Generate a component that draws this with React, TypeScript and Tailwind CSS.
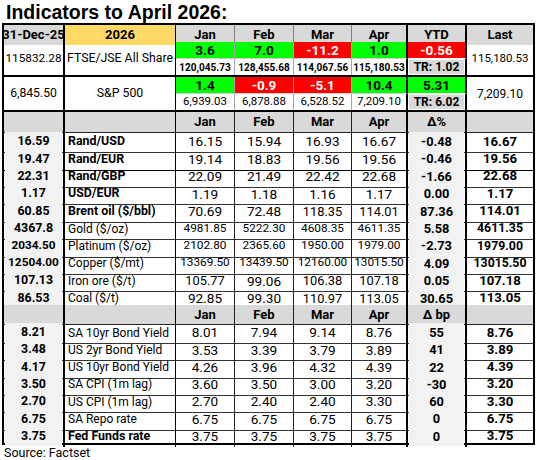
import React from "react";

const GRID = "grid grid-cols-[61px_111px_59px_59px_58px_56px_59px_66px]";

type Move = { v: string; up: boolean };

function sizeFor(s: string) {
  if (s.length >= 7) return "text-[11.8px]";
  if (s.length === 6) return "text-[12.8px]";
  return "text-[13.6px]";
}

const monthBorder = [
  "border-r border-r-[#1f1f1f]",
  "border-r border-r-[#1f1f1f]",
  "border-r border-r-[#1f1f1f]",
  "border-r-2 border-r-black",
];

function IndexBlock({
  c1,
  c1Size,
  label,
  moves,
  prices,
  priceBold,
  ytd,
  tr,
  last,
  lastSize,
}: {
  c1: string;
  c1Size: string;
  label: string;
  moves: Move[];
  prices: string[];
  priceBold: boolean;
  ytd: Move;
  tr: string;
  last: string;
  lastSize: string;
}) {
  const topBorder = [
    "border-r border-r-[#a6a6a6]",
    "border-r border-r-[#a6a6a6]",
    "border-r border-r-[#a6a6a6]",
    "border-r-2 border-r-black",
  ];
  return (
    <div className={`${GRID} grid-rows-[17px_16px] border-b-2 border-b-black`}>
      <div className={`row-span-2 flex items-center justify-center border-r-2 border-r-black ${c1Size}`}>{c1}</div>
      <div className="row-span-2 flex items-center justify-center border-r border-r-black text-[12.3px]">{label}</div>
      {moves.map((m, i) => (
        <div
          key={"m" + i}
          className={`flex items-center justify-center font-bold text-[13.5px] border-b border-b-[#cfcfcf] ${topBorder[i]} ${
            m.up ? "bg-[#00ff00] text-black" : "bg-[#ff0000] text-white"
          }`}
        >
          {m.v}
        </div>
      ))}
      <div
        className={`flex items-center justify-center font-bold text-[13.5px] border-r-2 border-r-black border-b border-b-white ${
          ytd.up ? "bg-[#00ff00] text-black" : "bg-[#ff0000] text-white"
        }`}
      >
        {ytd.v}
      </div>
      <div className={`row-span-2 flex items-center justify-center ${lastSize}`}>{last}</div>
      {prices.map((p, i) => (
        <div
          key={"p" + i}
          className={`flex items-center justify-center ${priceBold ? "font-bold text-[10px]" : "text-[11.5px]"} ${topBorder[i]}`}
        >
          {p}
        </div>
      ))}
      <div className="border-r-2 border-r-black p-px">
        <div className="flex h-full items-center justify-center bg-[#d9d9d9] font-bold text-[12px]">{tr}</div>
      </div>
    </div>
  );
}

function HeaderRow({ ytdLabel, h }: { ytdLabel: string; h: string }) {
  const cell = "flex items-center justify-center bg-[#d9d9d9] border-b border-b-[#262626] font-bold text-[13px]";
  return (
    <div className={`${GRID} ${h}`}>
      <div className={`${cell} border-r-2 border-r-black`}></div>
      <div className={`${cell} border-r border-r-black`}></div>
      {["Jan", "Feb", "Mar", "Apr"].map((m, i) => (
        <div key={m} className={`${cell} ${monthBorder[i]}`}>
          {m}
        </div>
      ))}
      <div className={`${cell} border-r-2 border-r-black`}>{ytdLabel}</div>
      <div className={cell}></div>
    </div>
  );
}

type Row = { c1: string; label: string; bold: boolean; m: string[]; d: string; last: string };

function DataRow({ r, h, bottom }: { r: Row; h: string; bottom: "thin" | "dark" | "thick" | "none" }) {
  const bb =
    bottom === "thick"
      ? "border-b-2 border-b-black"
      : bottom === "dark"
      ? "border-b border-b-black"
      : bottom === "thin"
      ? "border-b border-b-[#333333]"
      : "";
  return (
    <div className={`${GRID} ${h}`}>
      <div className={`border-r-2 border-r-black p-px ${bb}`}>
        <div className={`flex h-full items-center justify-center bg-[#f2f2f2] font-bold ${r.c1.length >= 7 ? "text-[11.8px]" : "text-[12.4px]"}`}>
          {r.c1}
        </div>
      </div>
      <div className={`flex items-center pl-[3px] border-r border-r-black ${r.bold ? "font-bold text-[12.4px]" : "text-[12px]"} ${bb}`}>
        {r.label}
      </div>
      {r.m.map((v, i) => (
        <div key={i} className={`flex items-center justify-center ${sizeFor(v)} ${monthBorder[i]} ${bb}`}>
          {v}
        </div>
      ))}
      <div className={`border-r-2 border-r-black p-px ${bb}`}>
        <div className="flex h-full items-center justify-center bg-[#f2f2f2] font-bold text-[12.8px]">{r.d}</div>
      </div>
      <div className={`flex items-center justify-center font-bold ${r.last.length >= 7 ? "text-[12.3px]" : "text-[13.2px]"} ${bb}`}>
        {r.last}
      </div>
    </div>
  );
}

const rows1: Row[] = [
  { c1: "16.59", label: "Rand/USD", bold: true, m: ["16.15", "15.94", "16.93", "16.67"], d: "-0.48", last: "16.67" },
  { c1: "19.47", label: "Rand/EUR", bold: true, m: ["19.14", "18.83", "19.56", "19.56"], d: "-0.46", last: "19.56" },
  { c1: "22.31", label: "Rand/GBP", bold: true, m: ["22.09", "21.49", "22.42", "22.68"], d: "-1.66", last: "22.68" },
  { c1: "1.17", label: "USD/EUR", bold: true, m: ["1.19", "1.18", "1.16", "1.17"], d: "0.00", last: "1.17" },
  { c1: "60.85", label: "Brent oil ($/bbl)", bold: true, m: ["70.69", "72.48", "118.35", "114.01"], d: "87.36", last: "114.01" },
  { c1: "4367.8", label: "Gold ($/oz)", bold: false, m: ["4981.85", "5222.30", "4608.35", "4611.35"], d: "5.58", last: "4611.35" },
  { c1: "2034.50", label: "Platinum ($/oz)", bold: false, m: ["2102.80", "2365.60", "1950.00", "1979.00"], d: "-2.73", last: "1979.00" },
  { c1: "12504.00", label: "Copper ($/mt)", bold: false, m: ["13369.50", "13439.50", "12160.00", "13015.50"], d: "4.09", last: "13015.50" },
  { c1: "107.13", label: "Iron ore ($/t)", bold: false, m: ["105.77", "99.06", "106.38", "107.18"], d: "0.05", last: "107.18" },
  { c1: "86.53", label: "Coal ($/t)", bold: false, m: ["92.85", "99.30", "110.97", "113.05"], d: "30.65", last: "113.05" },
];

const rows2: Row[] = [
  { c1: "8.21", label: "SA 10yr Bond Yield", bold: false, m: ["8.01", "7.94", "9.14", "8.76"], d: "55", last: "8.76" },
  { c1: "3.48", label: "US 2yr Bond Yield", bold: false, m: ["3.53", "3.39", "3.79", "3.89"], d: "41", last: "3.89" },
  { c1: "4.17", label: "US 10yr Bond Yield", bold: false, m: ["4.26", "3.96", "4.32", "4.39"], d: "22", last: "4.39" },
  { c1: "3.50", label: "SA CPI (1m lag)", bold: false, m: ["3.60", "3.50", "3.00", "3.20"], d: "-30", last: "3.20" },
  { c1: "2.70", label: "US CPI (1m lag)", bold: false, m: ["2.70", "2.40", "2.40", "3.30"], d: "60", last: "3.30" },
  { c1: "6.75", label: "SA Repo rate", bold: false, m: ["6.75", "6.75", "6.75", "6.75"], d: "0", last: "6.75" },
  { c1: "3.75", label: "Fed Funds rate", bold: true, m: ["3.75", "3.75", "3.75", "3.75"], d: "0", last: "3.75" },
];

export default function App() {
  const topCell = "flex items-center justify-center bg-[#d9d9d9] font-bold text-[13px]";
  return (
    <div className="w-[536px] h-[460px] bg-white text-black font-['Roboto',sans-serif] whitespace-nowrap overflow-hidden">
      <div className="h-[23px] pl-[6px] pt-[2px] font-['Liberation_Sans',Arial,sans-serif] font-bold text-[19.5px] leading-[21px]">
        Indicators to April 2026:
      </div>
      <div className="ml-[2px] w-[533px] border-2 border-black">
        <div className={`${GRID} h-[17px] border-b-2 border-b-black`}>
          <div className={`${topCell} border-r-2 border-r-black text-[12px]`}>31-Dec-25</div>
          <div className={`${topCell} bg-[#ffd966] border-r border-r-black`}>2026</div>
          {["Jan", "Feb", "Mar", "Apr"].map((m, i) => (
            <div key={m} className={`${topCell} ${i === 3 ? "border-r-2 border-r-black" : "border-r border-r-[#7f7f7f]"}`}>
              {m}
            </div>
          ))}
          <div className={`${topCell} border-r-2 border-r-black`}>YTD</div>
          <div className={topCell}>Last</div>
        </div>
        <IndexBlock
          c1="115832.28"
          c1Size="text-[11.8px]"
          label="FTSE/JSE All Share"
          moves={[
            { v: "3.6", up: true },
            { v: "7.0", up: true },
            { v: "-11.2", up: false },
            { v: "1.0", up: true },
          ]}
          prices={["120,045.73", "128,455.68", "114,067.56", "115,180.53"]}
          priceBold={true}
          ytd={{ v: "-0.56", up: false }}
          tr="TR: 1.02"
          last="115,180.53"
          lastSize="text-[11.5px]"
        />
        <IndexBlock
          c1="6,845.50"
          c1Size="text-[12.2px]"
          label="S&P 500"
          moves={[
            { v: "1.4", up: true },
            { v: "-0.9", up: false },
            { v: "-5.1", up: false },
            { v: "10.4", up: true },
          ]}
          prices={["6,939.03", "6,878.88", "6,528.52", "7,209.10"]}
          priceBold={false}
          ytd={{ v: "5.31", up: true }}
          tr="TR: 6.02"
          last="7,209.10"
          lastSize="text-[12px]"
        />
        <HeaderRow ytdLabel="Δ%" h="h-[19px]" />
        {rows1.map((r, i) => (
          <DataRow key={r.label} r={r} h="h-[17.4px]" bottom={i === rows1.length - 1 ? "thick" : i === 1 ? "dark" : "thin"} />
        ))}
        <HeaderRow ytdLabel="Δ bp" h="h-[17px]" />
        {rows2.map((r, i) => (
          <DataRow key={r.label} r={r} h="h-[17.3px]" bottom={i === rows2.length - 1 ? "none" : "thin"} />
        ))}
      </div>
      <div className="pl-[4px] text-[12.5px] leading-[16px]">Source: Factset</div>
    </div>
  );
}
